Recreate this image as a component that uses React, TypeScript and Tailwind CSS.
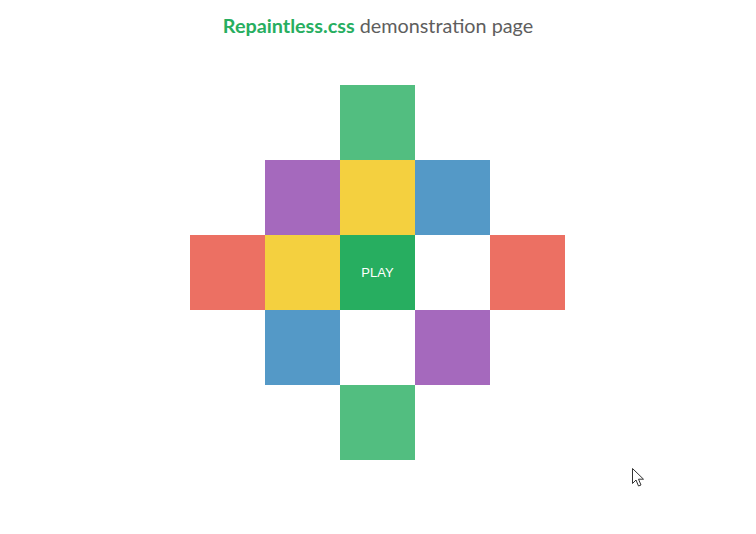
const cells: (string | null)[] = [
  null, null, 'bg-[#52be80]', null, null,
  null, 'bg-[#a569bd]', 'bg-[#f4d03f]', 'bg-[#5499c7]', null,
  'bg-[#ec7063]', 'bg-[#f4d03f]', 'play', 'bg-white', 'bg-[#ec7063]',
  null, 'bg-[#5499c7]', 'bg-white', 'bg-[#a569bd]', null,
  null, null, 'bg-[#52be80]', null, null,
];

export default function App() {
  return (
    <div className="relative w-[756px] h-[534px] bg-white overflow-hidden">
      <h1 className="pt-[12px] text-center text-[19.8px] leading-[26px] text-[#5e5e5e] font-['Lato',sans-serif]">
        <span className="font-bold text-[#27ae60]">Repaintless.css</span> demonstration page
      </h1>

      <div className="mt-[47px] ml-[190px] grid w-[375px] grid-cols-5">
        {cells.map((c, i) =>
          c === 'play' ? (
            <button
              key={i}
              className="flex h-[75px] w-[75px] items-center justify-center bg-[#27ae60] text-[13px] text-white font-['Liberation_Sans',Arial,sans-serif]"
            >
              PLAY
            </button>
          ) : (
            <div key={i} className={`h-[75px] w-[75px] ${c ?? ''}`} />
          )
        )}
      </div>

      {/* mouse cursor */}
      <svg className="absolute left-[632px] top-[468px]" width="13" height="20" viewBox="0 0 13 20">
        <path
          d="M0.5 0.5 L0.5 15.5 L4 12 L6.5 18 L9 17 L6.5 11.2 L11.5 11.2 Z"
          fill="white"
          stroke="#333"
          strokeWidth="1"
          strokeLinejoin="miter"
        />
      </svg>
    </div>
  );
}
